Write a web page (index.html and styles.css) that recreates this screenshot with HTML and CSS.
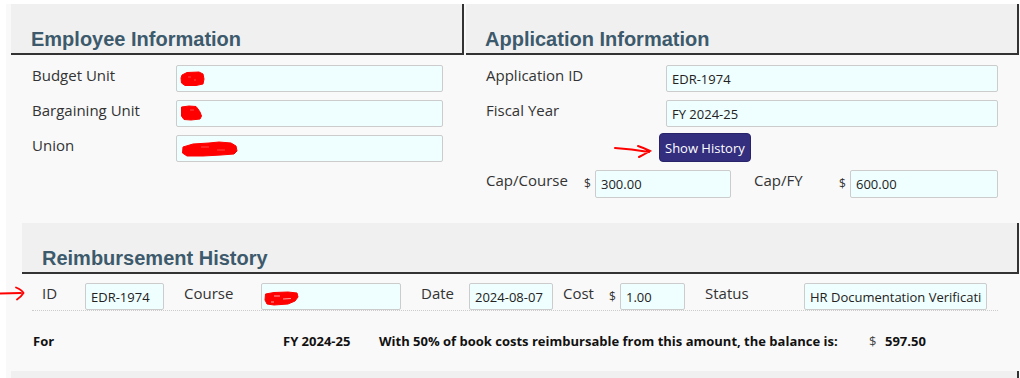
FILE: index.html
```html
<!DOCTYPE html>
<html lang="en">
<head>
    <meta charset="UTF-8">
    <meta name="viewport" content="width=device-width, initial-scale=1.0">
    <title>Reimbursement Application</title>
    <link rel="stylesheet" href="styles.css">
</head>
<body>

<div class="panel">

    <div class="info-row">
        <!-- Employee -->
        <section class="card card-employee">
            <h2 class="card-title">Employee Information</h2>
            <div class="card-body">
                <div class="field-row">
                    <label class="field-label">Budget Unit</label>
                    <div class="field field-emp">
                        <input class="text-input" type="text" value="">
                        <svg class="scribble scribble-1" viewBox="0 0 25 16"><path d="M2 4 L7 1.5 L19 1 L23 3 L24 8 L23 13 L16 14.5 L5 14.5 L1.5 12 L1 7 Z" fill="#f00" stroke="#f00" stroke-linejoin="round"/><path d="M8 6 L11 6 M14 9 L16 9" stroke="#f66" stroke-width="0.7"/></svg>
                    </div>
                </div>
                <div class="field-row">
                    <label class="field-label">Bargaining Unit</label>
                    <div class="field field-emp">
                        <input class="text-input" type="text" value="">
                        <svg class="scribble scribble-2" viewBox="0 0 23 16"><path d="M1.5 2 L9 1 L16 1.5 L18 4 L20 7 L21.5 11 L20 14 L11 15 L4 14.5 L1.5 11 Z" fill="#f00" stroke="#f00" stroke-linejoin="round"/><path d="M10 5 L14 5" stroke="#f66" stroke-width="0.7"/></svg>
                    </div>
                </div>
                <div class="field-row">
                    <label class="field-label">Union</label>
                    <div class="field field-emp">
                        <input class="text-input" type="text" value="">
                        <svg class="scribble scribble-3" viewBox="0 0 57 16"><path d="M2 6 L12 3 L28 2 L38 1 L50 2 L55 5 L56 10 L53 13 L40 14 L22 15 L6 15 L1.5 12 Z" fill="#f00" stroke="#f00" stroke-linejoin="round"/><path d="M20 6 L28 6 M36 9 L44 9" stroke="#f66" stroke-width="0.7"/></svg>
                    </div>
                </div>
            </div>
        </section>

        <!-- Application -->
        <section class="card card-app">
            <h2 class="card-title">Application Information</h2>
            <div class="card-body">
                <div class="field-row">
                    <label class="field-label app-label">Application ID</label>
                    <input class="text-input app-input" type="text" value="EDR-1974">
                </div>
                <div class="field-row">
                    <label class="field-label app-label">Fiscal Year</label>
                    <input class="text-input app-input" type="text" value="FY 2024-25">
                </div>
                <div class="history-btn-row">
                    <svg class="note-arrow arrow-btn" viewBox="0 0 40 16"><path d="M2 5 Q18 6 36 9 M25 3 Q31 5 37 8 Q32 11 26 14" fill="none" stroke="#f00" stroke-width="2" stroke-linecap="round"/></svg>
                    <button class="btn-history" type="button">Show History</button>
                </div>
                <div class="field-row cap-row">
                    <label class="field-label cap-label">Cap/Course</label>
                    <span class="dollar">$</span>
                    <input class="text-input cap-input cap-course" type="text" value="300.00">
                    <label class="field-label cap-fy-label">Cap/FY</label>
                    <span class="dollar">$</span>
                    <input class="text-input cap-input cap-fy" type="text" value="600.00">
                </div>
            </div>
        </section>
    </div>

    <!-- History -->
    <section class="card history">
        <h2 class="card-title">Reimbursement History</h2>
        <div class="history-row">
            <svg class="note-arrow arrow-row" viewBox="0 0 26 16"><path d="M0 8.5 L21 8 M16 2.5 Q22 5 23.5 8 Q21 12 17 14.5" fill="none" stroke="#f00" stroke-width="1.8" stroke-linecap="round"/></svg>
            <label class="field-label h-id">ID</label>
            <input class="text-input in-id" type="text" value="EDR-1974">
            <label class="field-label h-course">Course</label>
            <div class="field in-course">
                <input class="text-input" type="text" value="">
                <svg class="scribble scribble-4" viewBox="0 0 35 15"><path d="M1.5 3 L10 1.5 L24 1 L33 2 L34 6 L31 10 L24 13 L10 14 L3 13 L1 9 Z" fill="#f00" stroke="#f00" stroke-linejoin="round"/><path d="M10 5 L16 5 M19 8 L27 7.5 M7 11 L10 11" stroke="#fcc" stroke-width="0.8"/></svg>
            </div>
            <label class="field-label h-date">Date</label>
            <input class="text-input in-date" type="text" value="2024-08-07">
            <label class="field-label h-cost">Cost</label>
            <span class="dollar h-dollar">$</span>
            <input class="text-input in-cost" type="text" value="1.00">
            <label class="field-label h-status">Status</label>
            <input class="text-input in-status" type="text" value="HR Documentation Verification">
        </div>
        <div class="summary">
            <span class="sum-for">For</span>
            <span class="sum-fy">FY 2024-25</span>
            <span class="sum-text">With 50% of book costs reimbursable from this amount, the balance is:</span>
            <span class="sum-dollar">$</span>
            <span class="sum-value">597.50</span>
        </div>
    </section>

    <!-- Next section (cut off) -->
    <section class="card next-card">
        <div class="card-title"></div>
    </section>

</div>

</body>
</html>
```

FILE: styles.css
```css
* {
    box-sizing: border-box;
}

body {
    margin: 0;
    background-color: #ffffff;
    font-family: "Open Sans", Arial, sans-serif;
    color: #333;
}

.panel {
    margin: 4px 0 0 6px;
    padding: 0 1px 0 5px;
    background-color: #f9f9f9;
}

.info-row {
    display: flex;
    gap: 2px;
}

.card-title {
    display: flex;
    align-items: flex-end;
    height: 51px;
    margin: 0;
    padding: 0 0 2px 20px;
    background-color: #f0f0f0;
    border-right: 2px solid #333;
    border-bottom: 2px solid #333;
    font-family: "Liberation Sans", Arial, sans-serif;
    font-size: 20px;
    font-weight: bold;
    line-height: 24px;
    color: #3d5a6c;
}

.card-employee {
    width: 453px;
}

.card-app {
    flex: 1;
}

.card-app .card-title {
    padding-left: 19px;
}

.card-body {
    padding: 10px 21px 0 21px;
}

.card-app .card-body {
    padding-left: 20px;
}

.field-row {
    display: flex;
    align-items: flex-start;
    margin-bottom: 8px;
}

.field-label {
    flex: none;
    width: 144px;
    font-size: 15px;
    line-height: 20px;
    color: #333;
}

.app-label {
    width: 180px;
}

.text-input {
    height: 27px;
    margin: 0;
    padding: 0 5px;
    border: 1px solid #ccc;
    border-radius: 2px;
    background-color: #effefe;
    font-family: "Open Sans", Arial, sans-serif;
    font-size: 13px;
    color: #222;
    outline: none;
}

.field {
    position: relative;
    flex: none;
}

.field .text-input {
    width: 100%;
}

.field-emp {
    width: 267px;
}

.app-input {
    width: 332px;
}

.scribble {
    position: absolute;
}

.scribble-1 {
    left: 4px;
    top: 6px;
    width: 25px;
    height: 16px;
}

.scribble-2 {
    left: 4px;
    top: 5px;
    width: 23px;
    height: 16px;
}

.scribble-3 {
    left: 5px;
    top: 6px;
    width: 57px;
    height: 16px;
}

.scribble-4 {
    left: 3px;
    top: 8px;
    width: 35px;
    height: 15px;
}

/* show history */
.history-btn-row {
    position: relative;
    display: flex;
    margin: -2px 0 8px;
    padding-left: 173px;
}

.btn-history {
    height: 29px;
    padding: 0 5px;
    background-color: #332e7e;
    border: 1px solid #29246a;
    border-radius: 4px;
    color: white;
    font-family: "Open Sans", Arial, sans-serif;
    font-size: 13px;
}

.note-arrow {
    position: absolute;
}

.arrow-btn {
    left: 127px;
    top: 10px;
    width: 40px;
    height: 16px;
}

.cap-row .text-input {
    height: 28px;
}

.cap-label {
    width: 98px;
}

.cap-fy-label {
    width: 85px;
}

.dollar {
    flex: none;
    width: 11px;
    font-size: 12px;
    line-height: 28px;
    color: #333;
}

.cap-course {
    width: 136px;
    margin-right: 23px;
}

.cap-fy {
    width: 148px;
}

/* reimbursement history */
.history {
    margin: 17px 0 0 11px;
}

.history-row {
    position: relative;
    display: flex;
    align-items: flex-start;
    margin: 9px 21px 0 10px;
    padding-left: 10px;
    border-bottom: 1px dotted #ccc;
}

.arrow-row {
    left: -32px;
    top: 2px;
    width: 26px;
    height: 16px;
}

.h-id { width: 43px; }
.h-course { width: 77px; }
.h-date { width: 48px; }
.h-cost { width: 46px; }
.h-status { width: 99px; }

.h-dollar {
    line-height: 27px;
}

.in-id {
    width: 79px;
    margin-right: 20px;
}

.in-course {
    width: 140px;
    margin-right: 20px;
}

.in-date {
    width: 84px;
    margin-right: 10px;
}

.in-cost {
    width: 65px;
    margin-right: 20px;
}

.in-status {
    width: 183px;
}

.summary {
    display: flex;
    margin: 0 21px 0 10px;
    padding: 21px 0 21px 1px;
    font-size: 13px;
    line-height: 18px;
    font-weight: bold;
    color: #111;
}

.sum-for { width: 250px; }
.sum-fy { width: 96px; }
.sum-text { width: 490px; }

.sum-dollar {
    width: 16px;
    font-weight: normal;
    color: #444;
}

.next-card .card-title {
    height: 51px;
}
```
